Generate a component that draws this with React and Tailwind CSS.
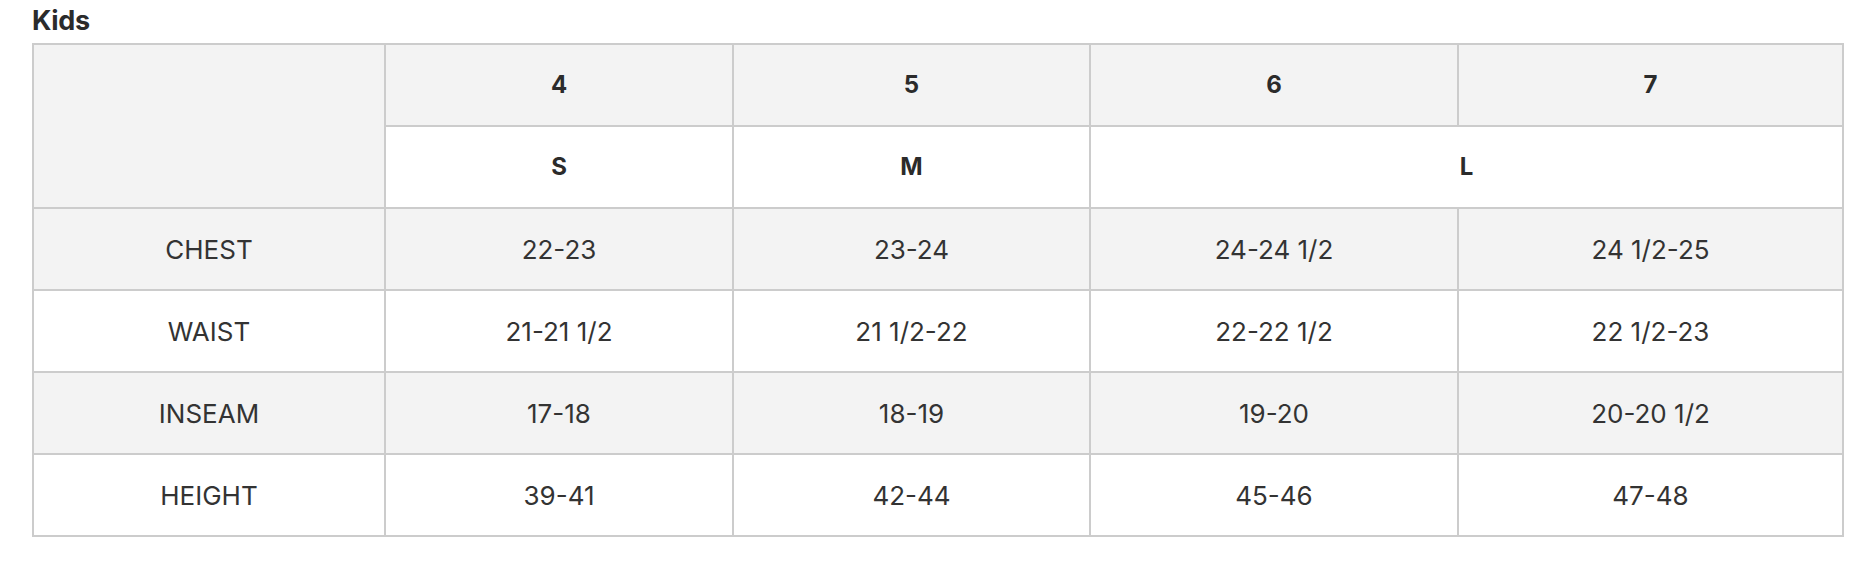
import React from 'react';

const sizes = ['4', '5', '6', '7'];

const rows = [
  { label: 'CHEST', values: ['22-23', '23-24', '24-24 1/2', '24 1/2-25'] },
  { label: 'WAIST', values: ['21-21 1/2', '21 1/2-22', '22-22 1/2', '22 1/2-23'] },
  { label: 'INSEAM', values: ['17-18', '18-19', '19-20', '20-20 1/2'] },
  { label: 'HEIGHT', values: ['39-41', '42-44', '45-46', '47-48'] },
];

const cell = 'border-2 border-[#cccccc] text-center align-middle';
const head = `${cell} text-[24px] font-bold text-[#2b2b2b]`;

export default function App() {
  return (
    <div className="min-h-screen bg-white text-[#333333] font-['Inter','Liberation_Sans',sans-serif]">
      <div className="pl-[32px] pt-[5px]">
        <h2 className="text-[27px] leading-[32px] font-bold text-[#2b2b2b] tracking-[-0.3px]">Kids</h2>

        <table className="mt-[6px] table-fixed border-collapse w-[1810px]">
          <colgroup>
            <col className="w-[352px]" />
            <col className="w-[348px]" />
            <col className="w-[357px]" />
            <col className="w-[368px]" />
            <col className="w-[385px]" />
          </colgroup>
          <thead>
            <tr className="h-[82px] bg-[#f3f3f3]">
              <th rowSpan={2} className={`${cell} bg-[#f3f3f3]`}></th>
              {sizes.map((s) => (
                <th key={s} className={head}>
                  {s}
                </th>
              ))}
            </tr>
            <tr className="h-[82px] bg-white">
              <th className={head}>S</th>
              <th className={head}>M</th>
              <th colSpan={2} className={head}>
                L
              </th>
            </tr>
          </thead>
          <tbody>
            {rows.map((r, i) => (
              <tr key={r.label} className={`h-[82px] ${i % 2 === 0 ? 'bg-[#f3f3f3]' : 'bg-white'}`}>
                <td className={`${cell} text-[26px] font-normal`}>{r.label}</td>
                {r.values.map((v, j) => (
                  <td key={j} className={`${cell} text-[26px] font-normal`}>
                    {v}
                  </td>
                ))}
              </tr>
            ))}
          </tbody>
        </table>
      </div>
    </div>
  );
}
